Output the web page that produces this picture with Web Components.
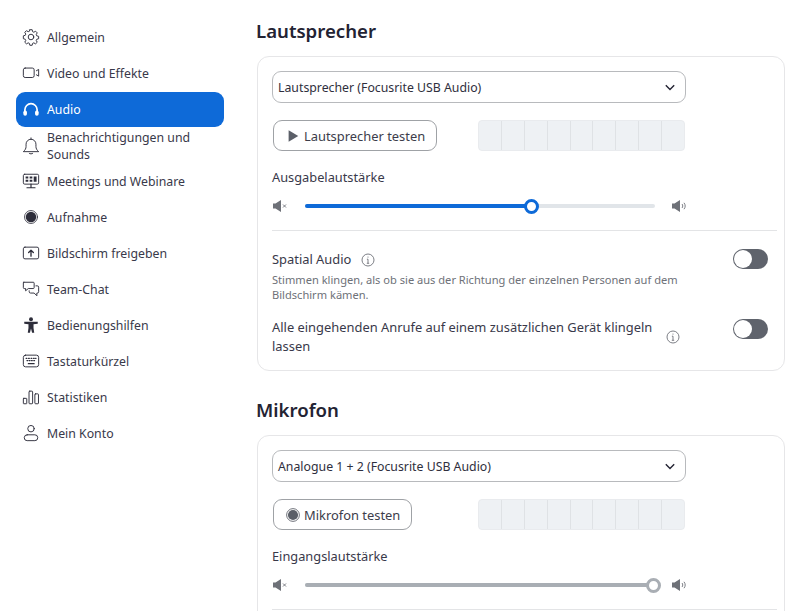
<!DOCTYPE html>
<html lang="de">
<head>
<meta charset="utf-8">
<title>Audio</title>
<style>
html, body { margin: 0; height: 100%; overflow: hidden; background: #fff; }
body { font-family: "Noto Sans", "Liberation Sans", sans-serif; color: #232333; }
</style>
</head>
<body>
<settings-app>
  <nav-item slot="nav" icon="gear">Allgemein</nav-item>
  <nav-item slot="nav" icon="video">Video und Effekte</nav-item>
  <nav-item slot="nav" icon="headset" active>Audio</nav-item>
  <nav-item slot="nav" icon="bell" two>Benachrichtigungen und Sounds</nav-item>
  <nav-item slot="nav" icon="meeting">Meetings und Webinare</nav-item>
  <nav-item slot="nav" icon="record">Aufnahme</nav-item>
  <nav-item slot="nav" icon="share">Bildschirm freigeben</nav-item>
  <nav-item slot="nav" icon="chat">Team-Chat</nav-item>
  <nav-item slot="nav" icon="person">Bedienungshilfen</nav-item>
  <nav-item slot="nav" icon="keyboard">Tastaturkürzel</nav-item>
  <nav-item slot="nav" icon="stats">Statistiken</nav-item>
  <nav-item slot="nav" icon="account">Mein Konto</nav-item>

  <audio-section title="Lautsprecher">
    <device-select>Lautsprecher (Focusrite USB Audio)</device-select>
    <test-row icon="play">Lautsprecher testen</test-row>
    <volume-slider label="Ausgabelautstärke" value="64.700" color="#0e6ad8"></volume-slider>
    <hr-line></hr-line>
    <toggle-row info="inline" note="Stimmen klingen, als ob sie aus der Richtung der einzelnen Personen auf dem Bildschirm kämen.">Spatial Audio</toggle-row>
    <toggle-row info="side">Alle eingehenden Anrufe auf einem zusätzlichen Gerät klingeln lassen</toggle-row>
  </audio-section>

  <audio-section title="Mikrofon">
    <device-select>Analogue 1 + 2 (Focusrite USB Audio)</device-select>
    <test-row icon="rec">Mikrofon testen</test-row>
    <volume-slider label="Eingangslautstärke" value="99.700" color="#a9aeb4"></volume-slider>
    <hr-line></hr-line>
  </audio-section>
</settings-app>

<script>
const ICONS = {
  gear: `<path d="M8.700 1.900h2.600l.5 2.200 1.300.6 2-1.100 1.800 1.800-1.100 2 .6 1.300 2.100.6v2.600l-2.100.6-.6 1.300 1.100 2-1.800 1.800-2-1.100-1.300.6-.5 2.100H8.700l-.5-2.100-1.300-.6-2 1.100-1.800-1.800 1.100-2-.6-1.300-2.100-.6V8.700l2.100-.6.6-1.300-1.100-2 1.800-1.800 2 1.100 1.300-.6z"/><circle cx="10" cy="10" r="3.100"/>`,
  video: `<rect x="1.500" y="4.500" width="12" height="10.500" rx="2"/><path d="M16 7.500l2.500-1.500v7.500l-2.500-1.500"/>`,
  headset: `<path d="M3.200 11.500V9.800a6.800 6.800 0 0 1 13.600 0v1.700" stroke-width="1.900"/><rect x="1.500" y="10.500" width="4" height="6" rx="2" fill="currentColor" stroke="none"/><rect x="14.500" y="10.500" width="4" height="6" rx="2" fill="currentColor" stroke="none"/>`,
  bell: `<path d="M1.800 16c1.800-1.500 2.700-3.200 2.700-5.500V8a5.500 5.500 0 0 1 11 0v2.500c0 2.300.9 4 2.700 5.500z"/><path d="M10 1v1.500M8 18.200c.6.800 3.400.8 4 0"/>`,
  meeting: `<rect x="1.500" y="2.500" width="17" height="11" rx="1.500"/><path d="M4 5h3v2.200H4zM8.500 5h3v2.200h-3zM13 5h3.200v5.800H13zM4 8.600h3v2.200H4zM8.500 8.600h3v2.200h-3z" fill="currentColor" stroke="none"/><path d="M10 13.500v3.500M5.500 17.500h9" stroke-width="1.300"/>`,
  record: `<circle cx="10" cy="10" r="7.200" stroke-width=".9"/><circle cx="10" cy="10" r="5.800" fill="currentColor" stroke="none"/>`,
  share: `<rect x="1.500" y="3.500" width="17" height="13" rx="1.800"/><path d="M10 13.500V7.200M7.400 9.500L10 6.800l2.600 2.700" stroke-width="1.500"/>`,
  chat: `<path d="M2 2.500h10.500a1 1 0 0 1 1 1v5a1 1 0 0 1-1 1H7l-3 2.500V9.500H2.500a1 1 0 0 1-1-1V3a.5.5 0 0 1 .5-.5z"/><path d="M15.500 6.500H17a1.500 1.500 0 0 1 1.500 1.500v5a1.500 1.500 0 0 1-1.500 1.500h-.5v3l-3-3H9.500a1.500 1.500 0 0 1-1.500-1.500v-1"/>`,
  person: `<circle cx="10" cy="3.500" r="2.200" fill="currentColor" stroke="none"/><path d="M2.500 6.500h15v2l-4.700.6v4.300l.8 5.100h-2.400L10 14l-1.200 4.500H6.400l.8-5.100V9.100l-4.700-.6z" fill="currentColor" stroke="none"/>`,
  keyboard: `<rect x="1.500" y="3.500" width="17" height="13" rx="2.500"/><path d="M4.500 7h1M7.200 7h1M10 7h1M12.700 7h1M15 7h.6M5.500 9.500h1M8 9.500h1M10.500 9.500h1M13 9.500h1M7 13h6.500" stroke-width="1.300"/>`,
  stats: `<rect x="1.500" y="11.500" width="3.800" height="6" rx=".5"/><rect x="7.800" y="3.500" width="4" height="14" rx=".8"/><rect x="14.300" y="6.500" width="4" height="11" rx=".8"/>`,
  account: `<circle cx="10" cy="5.200" r="3.600"/><rect x="2.500" y="12" width="15" height="6.500" rx="3.200"/>`,
  play: `<path d="M3 1.500l11 6.500-11 6.500z" fill="currentColor" stroke="none"/>`,
  rec: `<circle cx="8" cy="8" r="7.300" stroke-width="1"/><circle cx="8" cy="8" r="5.800" fill="currentColor" stroke="none"/>`
};

class SettingsApp extends HTMLElement {
  constructor() {
    super();
    this.attachShadow({ mode: 'open' }).innerHTML = `
      <style>
        :host { display: flex; height: 611px; overflow: hidden; }
        nav { box-sizing: border-box; width: 256px; flex: none; padding: 19px 32px 0 16px; }
        main { flex: none; width: 529px; }
      </style>
      <nav><slot name="nav"></slot></nav>
      <main><slot></slot></main>`;
  }
}

class NavItem extends HTMLElement {
  constructor() {
    super();
    const active = this.hasAttribute('active');
    this.attachShadow({ mode: 'open' }).innerHTML = `
      <style>
        :host { display: flex; align-items: center; gap: 7px; box-sizing: border-box; height: 36px; padding-left: 6px;
          font-size: 12.300px; line-height: 17px; border-radius: 9px;
          color: ${active ? '#fff' : '#39394a'}; background: ${active ? '#0e6ad8' : 'transparent'}; }
        :host([active]) { height: 35px; margin-top: 1px; }
        :host([two]) { padding-top: 2px; }
        svg { flex: none; width: 18px; height: 18px; fill: none; stroke: ${active ? '#fff' : '#2d2d3a'}; color: ${active ? '#fff' : '#2d2d3a'}; stroke-width: 1.050;
          stroke-linejoin: round; stroke-linecap: round; }
      </style>
      <svg viewBox="0 0 20 20">${ICONS[this.getAttribute('icon')]}</svg>
      <span><slot></slot></span>`;
  }
}

class AudioSection extends HTMLElement {
  constructor() {
    super();
    this.attachShadow({ mode: 'open' }).innerHTML = `
      <style>
        :host { display: block; }
        h2 { margin: 0; height: 56px; box-sizing: border-box; padding-top: 18px; font-size: 18.600px; line-height: 26px; font-weight: 600; color: #232333; }
        .card { box-sizing: border-box; border: 1px solid #e6e6e8; border-radius: 12px; padding: 14px 7px 14px 14px; margin-left: 1px; margin-bottom: 8px; }
      </style>
      <h2>${this.getAttribute('title')}</h2>
      <div class="card"><slot></slot></div>`;
  }
}

class DeviceSelect extends HTMLElement {
  constructor() {
    super();
    this.attachShadow({ mode: 'open' }).innerHTML = `
      <style>
        :host { display: flex; align-items: center; justify-content: space-between; box-sizing: border-box; width: 414px; height: 32px;
          padding: 0 10px 0 5px; border: 1px solid #b8babd; border-radius: 9px; font-size: 12.300px; color: #2f2f3d; }
        svg { width: 10px; height: 7px; fill: none; stroke: #232333; stroke-width: 1.400; }
      </style>
      <span><slot></slot></span>
      <svg viewBox="0 0 10 7"><path d="M.8 1.200L5 5.400l4.200-4.200"/></svg>`;
  }
}

class TestRow extends HTMLElement {
  constructor() {
    super();
    const cells = '<i></i>'.repeat(9);
    this.attachShadow({ mode: 'open' }).innerHTML = `
      <style>
        :host { display: flex; align-items: stretch; justify-content: space-between; width: 412px; height: 31px; margin: 17px 0 0 1px; }
        button { display: flex; align-items: center; gap: 4px; box-sizing: border-box; margin: 0; padding: 0 11px 0 12px; background: #fff;
          border: 1px solid #9fa2a6; border-radius: 9px; font: inherit; font-size: 12.900px; color: #3d3d4b; }
        svg { width: 14px; height: 14px; color: #5b5f68; fill: none; stroke: currentColor; }
        .meter { display: flex; width: 207px; box-sizing: border-box; border-radius: 4px; overflow: hidden; background: #eef1f4; border: 1px solid #e9ebee; }
        i { flex: 1; border-left: 1px solid #dfe2e5; }
        i:first-child { border-left: 0; }
      </style>
      <button><svg viewBox="0 0 16 16">${ICONS[this.getAttribute('icon')]}</svg><span><slot></slot></span></button>
      <div class="meter">${cells}</div>`;
  }
}

class VolumeSlider extends HTMLElement {
  constructor() {
    super();
    const value = this.getAttribute('value');
    const color = this.getAttribute('color');
    this.attachShadow({ mode: 'open' }).innerHTML = `
      <style>
        :host { display: block; margin-top: 17px; font-size: 12.800px; color: #39394a; }
        .label { line-height: 19px; }
        .row { display: flex; align-items: center; height: 20px; margin-top: 9px; }
        svg { flex: none; width: 16px; height: 14px; fill: #6e7178; stroke: #6e7178; }
        .track { position: relative; flex: none; width: 350px; height: 4px; margin: 0 16px 0 17px; border-radius: 2px; background: #e1e5e9; }
        .fill { height: 100%; border-radius: 2px; background: ${color}; width: ${value}%; }
        .thumb { position: absolute; top: -5.500px; left: calc(${value}% - 7.500px); box-sizing: border-box; width: 15px; height: 15px; border-radius: 50%;
          background: #fff; border: 3px solid ${color}; }
      </style>
      <div class="label">${this.getAttribute('label')}</div>
      <div class="row">
        <svg viewBox="0 0 16 14"><path d="M1 4.500h2.500L9 1v12L3.500 9.500H1z" stroke="none"/><path d="M11 5.500l3 3M14 5.500l-3 3" stroke-width=".9" fill="none"/></svg>
        <div class="track"><div class="fill"></div><div class="thumb"></div></div>
        <svg viewBox="0 0 16 14"><path d="M1 4.500h2.500L9 1v12L3.500 9.500H1z" stroke="none"/><path d="M11 5c1 1.200 1 2.800 0 4M13 3.800c1.600 2 1.600 4.400 0 6.400" stroke-width=".9" fill="none"/></svg>
      </div>`;
  }
}

class HrLine extends HTMLElement {
  constructor() {
    super();
    this.attachShadow({ mode: 'open' }).innerHTML = `
      <style>:host { display: block; height: 1px; background: #e3e4e6; margin-top: 14px; width: 505px; }</style>`;
  }
}

const INFO = `<svg class="info" viewBox="0 0 14 14"><circle cx="7" cy="7" r="6"/><path d="M7 6.200v4M5.800 10.300h2.400M5.900 6.200H7" /><circle cx="7" cy="4" r=".6" fill="#6e7178" stroke="none"/></svg>`;

class ToggleRow extends HTMLElement {
  constructor() {
    super();
    const kind = this.getAttribute('info');
    const note = this.getAttribute('note');
    this.attachShadow({ mode: 'open' }).innerHTML = `
      <style>
        :host { display: flex; justify-content: space-between; align-items: flex-start; margin-top: 19px; width: 496px; font-size: 12.900px; line-height: 19px; color: #39394a; }
        :host([info="side"]) { margin-top: 17px; }
        :host([info="inline"]) .toggle { margin-top: -1px; }
        .text { width: 420px; }
        .title { display: flex; align-items: center; gap: 10px; }
        .note { width: 420px; margin-top: 3px; font-size: 11.100px; line-height: 15px; color: #6e7178; }
        .side { display: flex; align-items: center; justify-content: space-between; width: 408px; margin-top: -1px; }
        .side span { width: 385px; }
        .info { flex: none; width: 14px; height: 14px; fill: none; stroke: #6e7178; stroke-width: .9; }
        .toggle { flex: none; position: relative; width: 35px; height: 20px; border-radius: 10px; background: #5f636c; }
        .toggle::after { content: ""; position: absolute; left: 1px; top: 1px; width: 18px; height: 18px; border-radius: 50%; background: #fff; }
      </style>
      ${kind === 'inline'
        ? `<div class="text"><div class="title"><span><slot></slot></span>${INFO}</div><div class="note">${note}</div></div>`
        : `<div class="side"><span><slot></slot></span>${INFO}</div>`}
      <div class="toggle"></div>`;
  }
}

customElements.define('settings-app', SettingsApp);
customElements.define('nav-item', NavItem);
customElements.define('audio-section', AudioSection);
customElements.define('device-select', DeviceSelect);
customElements.define('test-row', TestRow);
customElements.define('volume-slider', VolumeSlider);
customElements.define('hr-line', HrLine);
customElements.define('toggle-row', ToggleRow);
</script>
</body>
</html>
